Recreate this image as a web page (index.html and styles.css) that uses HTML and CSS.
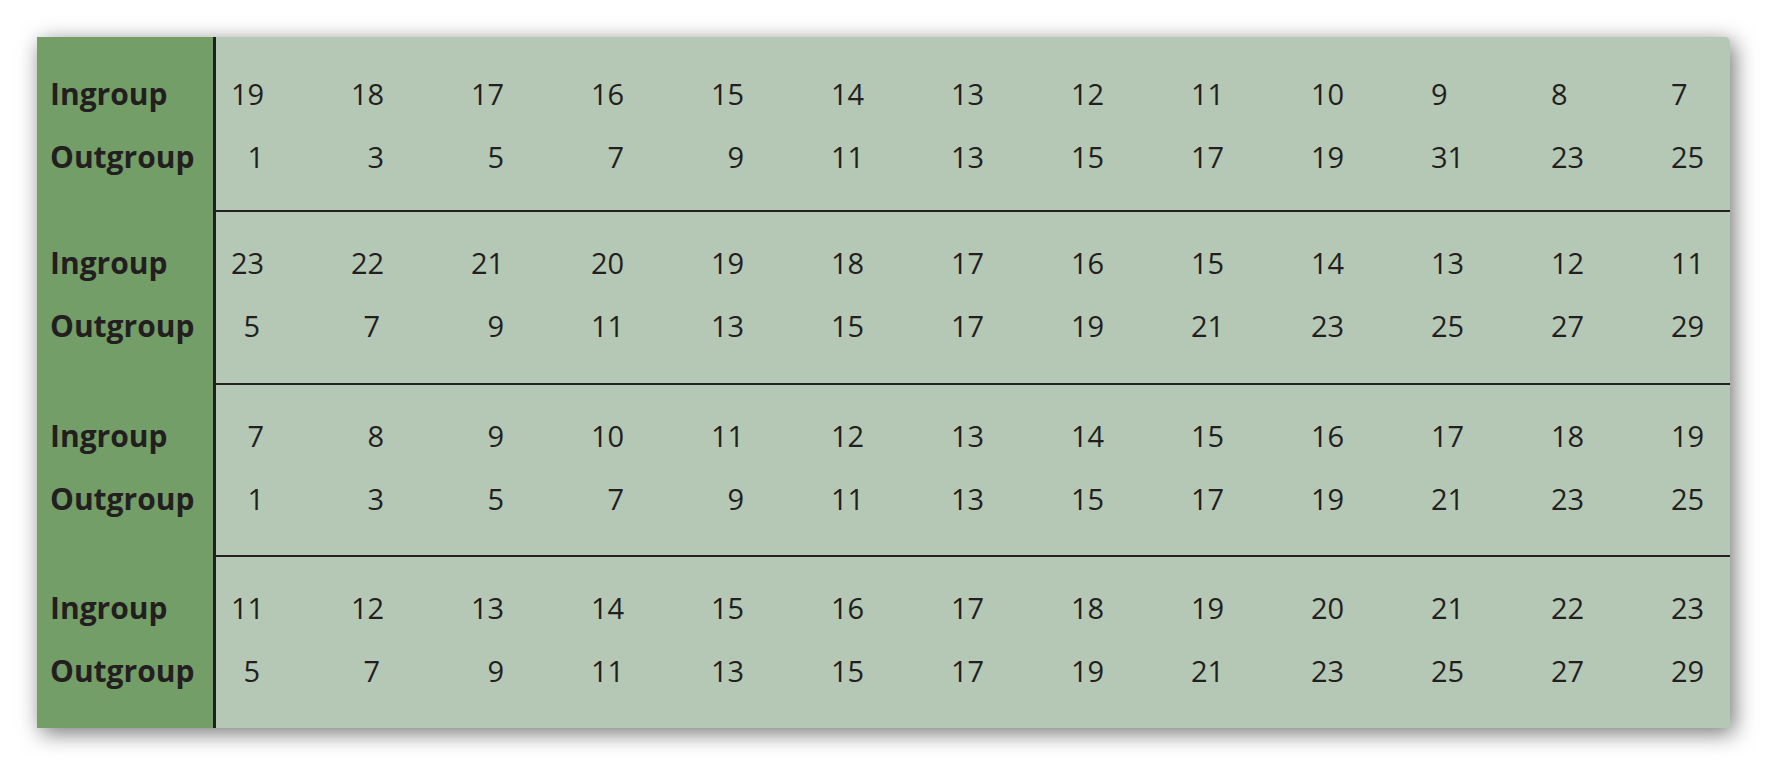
FILE: index.html
```html
<!DOCTYPE html>
<html lang="en">
<head>
<meta charset="utf-8">
<title>Ingroup / Outgroup</title>
<link rel="stylesheet" href="styles.css">
</head>
<body>
<div class="table">
  <div class="group">
    <div class="lab"><div class="row">Ingroup</div><div class="row">Outgroup</div></div>
    <div class="data">
      <div class="row"><span>19</span><span>18</span><span>17</span><span>16</span><span>15</span><span>14</span><span>13</span><span>12</span><span>11</span><span>10</span><span>9</span><span>8</span><span>7</span></div>
      <div class="row"><span class="r">1</span><span class="r">3</span><span class="r">5</span><span class="r">7</span><span class="r">9</span><span>11</span><span>13</span><span>15</span><span>17</span><span>19</span><span>31</span><span>23</span><span>25</span></div>
    </div>
  </div>
  <div class="group">
    <div class="lab"><div class="row">Ingroup</div><div class="row">Outgroup</div></div>
    <div class="data">
      <div class="row"><span>23</span><span>22</span><span>21</span><span>20</span><span>19</span><span>18</span><span>17</span><span>16</span><span>15</span><span>14</span><span>13</span><span>12</span><span>11</span></div>
      <div class="row"><span class="c">5</span><span class="c">7</span><span class="r">9</span><span>11</span><span>13</span><span>15</span><span>17</span><span>19</span><span>21</span><span>23</span><span>25</span><span>27</span><span>29</span></div>
    </div>
  </div>
  <div class="group">
    <div class="lab"><div class="row">Ingroup</div><div class="row">Outgroup</div></div>
    <div class="data">
      <div class="row"><span class="r">7</span><span class="r">8</span><span class="r">9</span><span>10</span><span>11</span><span>12</span><span>13</span><span>14</span><span>15</span><span>16</span><span>17</span><span>18</span><span>19</span></div>
      <div class="row"><span class="r">1</span><span class="r">3</span><span class="r">5</span><span class="r">7</span><span class="r">9</span><span>11</span><span>13</span><span>15</span><span>17</span><span>19</span><span>21</span><span>23</span><span>25</span></div>
    </div>
  </div>
  <div class="group">
    <div class="lab"><div class="row">Ingroup</div><div class="row">Outgroup</div></div>
    <div class="data">
      <div class="row"><span>11</span><span>12</span><span>13</span><span>14</span><span>15</span><span>16</span><span>17</span><span>18</span><span>19</span><span>20</span><span>21</span><span>22</span><span>23</span></div>
      <div class="row"><span class="c">5</span><span class="c">7</span><span class="r">9</span><span>11</span><span>13</span><span>15</span><span>17</span><span>19</span><span>21</span><span>23</span><span>25</span><span>27</span><span>29</span></div>
    </div>
  </div>
</div>
</body>
</html>
```

FILE: styles.css
```css
html, body {
  margin: 0;
  padding: 0;
  background: #ffffff;
}

body {
  width: 1767px;
  height: 766px;
  overflow: hidden;
  font-family: "Open Sans", "Noto Sans", "Liberation Sans", sans-serif;
  color: #231f20;
}

.table {
  margin: 37px 0 0 37px;
  width: 1693px;
  height: 691px;
  display: flex;
  flex-direction: column;
  border-radius: 0 5px 3px 0;
  overflow: hidden;
  box-shadow: 4px 5px 22px rgba(0, 0, 0, 0.55);
  background: #b5c7b5;
}

.group {
  display: flex;
  flex: 1 1 0;
  min-height: 0;
}

.lab {
  box-sizing: border-box;
  width: 179px;
  flex: none;
  background: #739e67;
  border-right: 3px solid #231f20;
  padding: 25px 0 0 13px;
  font-weight: 700;
  font-size: 30px;
}

.data {
  box-sizing: border-box;
  flex: 1;
  padding: 25px 0 0 15px;
  font-size: 29px;
}

.group + .group .data {
  border-top: 2px solid #231f20;
  padding-top: 19px;
}

.group + .group .lab {
  padding-top: 21px;
}

.row {
  height: 63px;
  line-height: 63px;
  white-space: nowrap;
}

.data .row {
  display: grid;
  grid-template-columns: repeat(12, 120px) 1fr;
}

.data .row span {
  display: block;
  box-sizing: border-box;
  width: 2ch;
  text-align: left;
}

.data .row span.r {
  text-align: right;
}

.data .row span.c {
  text-align: right;
  padding-right: 4px;
}
```
